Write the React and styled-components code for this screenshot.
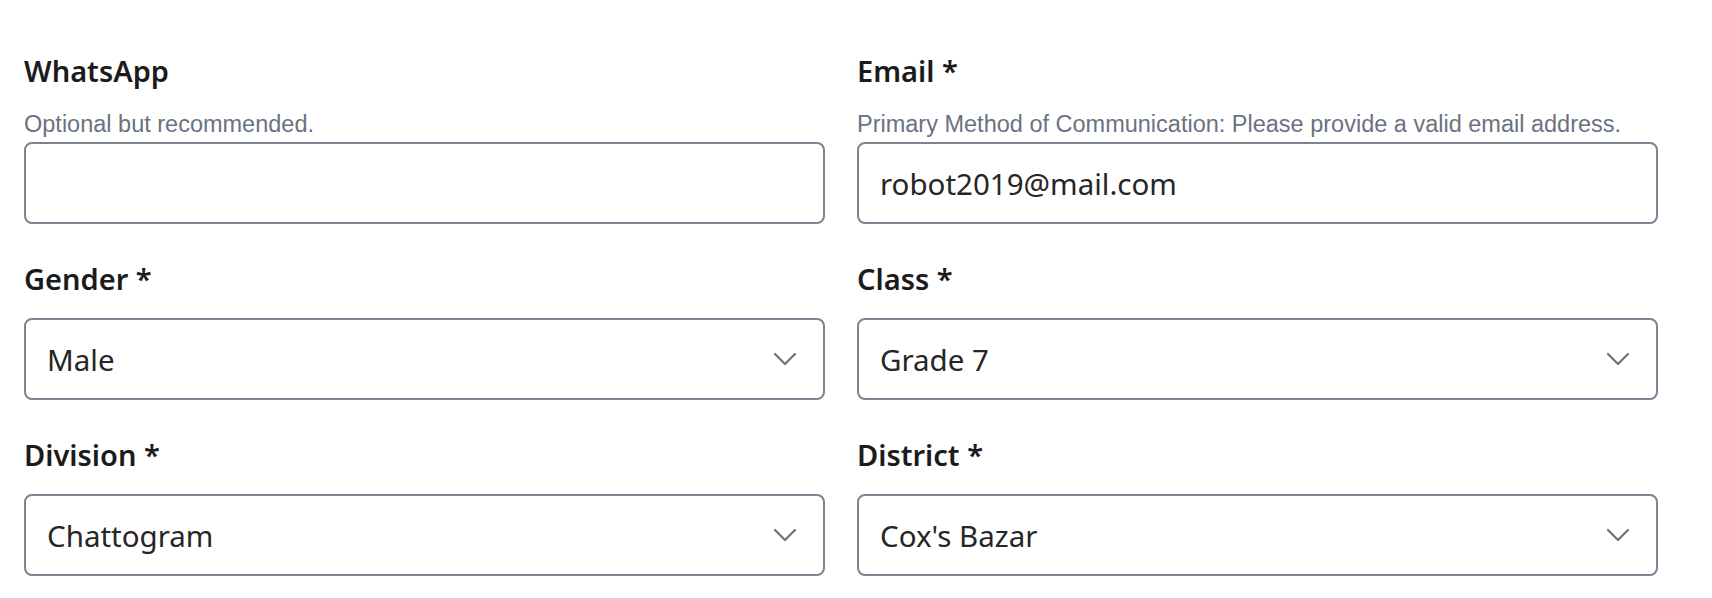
import React from 'react';
import styled, { createGlobalStyle } from 'styled-components';

const GlobalStyle = createGlobalStyle`
    html, body {
        margin: 0;
        padding: 0;
        background: #ffffff;
    }
    * {
        box-sizing: border-box;
    }
`

const Form = styled.form`
    width: 1634px;
    margin-left: 24px;
    padding-top: 50px;
    display: grid;
    grid-template-columns: 1fr 1fr;
    column-gap: 32px;
    row-gap: 34px;
    font-family: "Noto Sans", "Open Sans", sans-serif;
`
const Field = styled.div`
    display: flex;
    flex-direction: column;
`
const Label = styled.label`
    font-size: 29px;
    line-height: 42px;
    font-weight: 600;
    color: #1b1b1b;
    margin-bottom: 18px;
`
const Hint = styled.p`
    margin: 0 0 3px;
    font-family: "Liberation Sans", Arial, sans-serif;
    font-size: 23.5px;
    line-height: 29px;
    color: #6b7280;
`
const controlStyles = `
    width: 100%;
    height: 82px;
    padding: 0 21px;
    border: 2px solid #7d8391;
    border-radius: 8px;
    background: #ffffff;
    font-family: "Noto Sans", "Open Sans", sans-serif;
    font-size: 29.5px;
    color: #262626;
    outline: none;
`
const Input = styled.input`
    ${controlStyles}
`
const SelectWrap = styled.div`
    position: relative;
`
const Select = styled.select`
    ${controlStyles}
    appearance: none;
    -webkit-appearance: none;
    padding-right: 70px;
`
const Chevron = styled.svg`
    position: absolute;
    right: 28px;
    top: 50%;
    width: 24px;
    height: 14px;
    transform: translateY(-50%);
    pointer-events: none;
`

const ChevronIcon = () => (
    <Chevron viewBox="0 0 24 14" fill="none">
        <path d="M2 2l10 10 10-10" stroke="#6b7280" strokeWidth="2.2" strokeLinecap="round" strokeLinejoin="round" />
    </Chevron>
)

const Dropdown = ({ value, options }) => (
    <SelectWrap>
        <Select defaultValue={value}>
            {options.map(o => <option key={o}>{o}</option>)}
        </Select>
        <ChevronIcon />
    </SelectWrap>
)

const App = () => {
    return (
        <>
            <GlobalStyle />
            <Form onSubmit={e => e.preventDefault()}>
                <Field>
                    <Label>WhatsApp</Label>
                    <Hint>Optional but recommended.</Hint>
                    <Input type="tel" />
                </Field>
                <Field>
                    <Label>Email *</Label>
                    <Hint>Primary Method of Communication: Please provide a valid email address.</Hint>
                    <Input type="email" defaultValue="robot2019@mail.com" />
                </Field>
                <Field>
                    <Label>Gender *</Label>
                    <Dropdown value="Male" options={['Male', 'Female', 'Other']} />
                </Field>
                <Field>
                    <Label>Class *</Label>
                    <Dropdown value="Grade 7" options={['Grade 6', 'Grade 7', 'Grade 8', 'Grade 9', 'Grade 10']} />
                </Field>
                <Field>
                    <Label>Division *</Label>
                    <Dropdown value="Chattogram" options={['Barishal', 'Chattogram', 'Dhaka', 'Khulna', 'Rajshahi', 'Rangpur', 'Mymensingh', 'Sylhet']} />
                </Field>
                <Field>
                    <Label>District *</Label>
                    <Dropdown value="Cox's Bazar" options={["Bandarban", "Chattogram", "Comilla", "Cox's Bazar", "Feni", "Rangamati"]} />
                </Field>
            </Form>
        </>
    )
};

export default App;
